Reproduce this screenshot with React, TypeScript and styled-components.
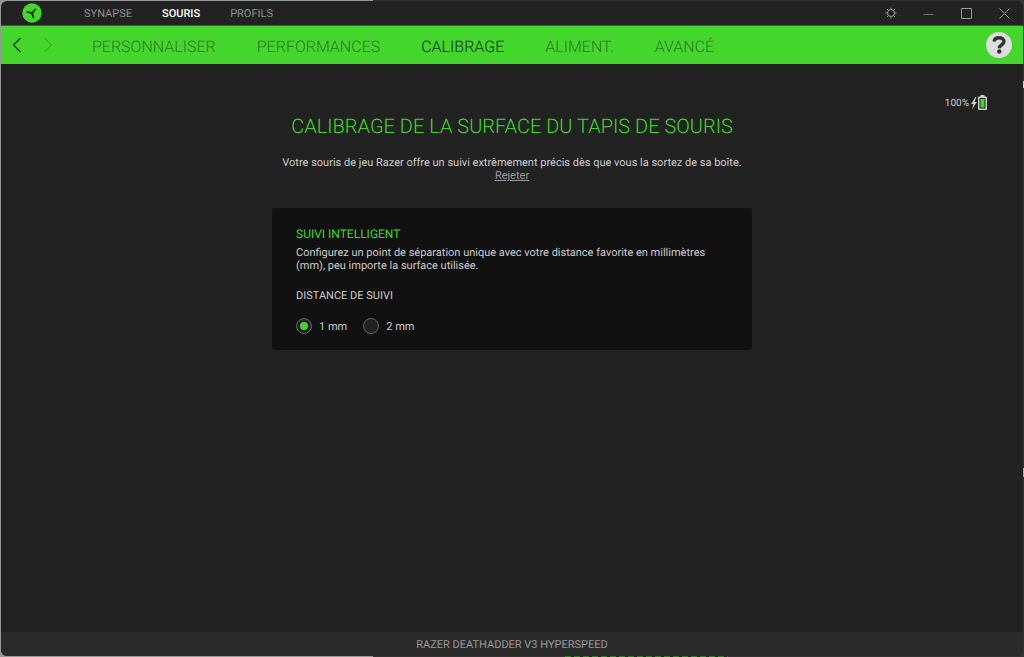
import React, { useState } from "react";
import styled, { createGlobalStyle } from "styled-components";

const GlobalStyle = createGlobalStyle`
  *, *::before, *::after { box-sizing: border-box; }
  body {
    margin: 0;
    background: #050505;
    font-family: Roboto, "Liberation Sans", sans-serif;
    font-size: 11px;
    line-height: 13px;
    color: #ccc;
    text-rendering: geometricPrecision;
  }
  button { font: inherit; border: 0; padding: 0; background: none; cursor: pointer; }
`;

const Desktop = styled.div`
  min-height: 100vh;
  padding: 1px;
  display: flex;
  background:
    linear-gradient(#ccc, #ccc) 100% 81px / 1px 7px no-repeat,
    linear-gradient(#aaa, #aaa) 100% 468px / 1px 9px no-repeat,
    repeating-linear-gradient(90deg, #2f7a24 0 6px, #222 6px 9px) 565px 100% / 163px 1px no-repeat,
    linear-gradient(90deg, #949897 373px, #333 373px);
`;

const Window = styled.div`
  flex: 1;
  display: flex;
  flex-direction: column;
  background: #222;
  border-radius: 6px;
  overflow: hidden;
`;

const TitleBar = styled.header`
  display: flex;
  align-items: center;
  height: 25px;
  padding: 0 12px 0 21px;
  border-bottom: 1px solid #2f6b27;
`;

const MainNav = styled.nav`
  display: flex;
  flex: 1;
  gap: 30px;
  margin-left: 42px;
`;

const MainLink = styled.a<{ $active?: boolean }>`
  color: ${(p) => (p.$active ? "#fff" : "#8f8f8f")};
  font-weight: ${(p) => (p.$active ? 500 : 400)};
  text-decoration: none;
`;

const WindowControls = styled.div`
  display: flex;
  gap: 25px;
`;

const IconButton = styled.button`
  display: grid;
  place-items: center;
  width: 13px;
  height: 16px;
  color: #999;
`;

const TabBar = styled.div`
  display: flex;
  align-items: center;
  height: 38px;
  padding: 0 11px;
  background: #44d62c;
`;

const Arrow = styled.button`
  display: grid;
  width: 10px;
  height: 16px;
  margin-right: 21px;
  color: #143f0d;
  &:disabled { color: #2d961d; }
`;

const Tabs = styled.nav`
  display: flex;
  flex: 1;
  gap: 41px;
  margin-left: 18px;
  padding-top: 3px;
`;

const Tab = styled.a<{ $active?: boolean }>`
  color: ${(p) => (p.$active ? "#102c0b" : "#2a7a1e")};
  font-size: 16px;
  line-height: 20px;
  font-weight: 300;
  text-decoration: none;
`;

const HelpButton = styled.button`
  display: grid;
  place-items: center;
  width: 26px;
  height: 26px;
  border-radius: 50%;
  background: #ddd;
  color: #333;
`;

const Content = styled.main`
  flex: 1;
  display: flex;
  flex-direction: column;
  align-items: center;
  padding: 30px 16px;
`;

const Battery = styled.div`
  align-self: flex-end;
  display: flex;
  align-items: center;
  gap: 2px;
  height: 18px;
  margin-right: 20px;
  font-size: 10px;
`;

const Title = styled.h1`
  margin: 0;
  color: #44d62c;
  font-size: 20px;
  line-height: 28px;
  font-weight: 300;
  text-align: center;
`;

const Intro = styled.p`
  margin: 16px 0 0;
  text-align: center;
`;

const Dismiss = styled.button`
  color: #999;
  text-decoration: underline;
`;

const Card = styled.section`
  width: 480px;
  max-width: 100%;
  margin-top: 26px;
  padding: 18px 24px 16px;
  border-radius: 3px;
  background: #111;
`;

const CardTitle = styled.h2`
  margin: 0 0 4px;
  color: #44d62c;
  font-size: 12px;
  line-height: 16px;
  font-weight: 400;
`;

const CardText = styled.p`
  margin: 0;
`;

const Options = styled.fieldset`
  display: flex;
  gap: 16px;
  margin: 17px 0 0;
  padding: 0;
  border: 0;
`;

const Legend = styled.legend`
  padding: 0;
  margin-bottom: 16px;
`;

const Option = styled.label`
  display: flex;
  align-items: center;
  gap: 7px;
`;

const Radio = styled.input`
  appearance: none;
  display: grid;
  place-items: center;
  width: 16px;
  height: 16px;
  margin: 0;
  border: 1px solid #666;
  border-radius: 50%;
  background: #222;
  &:checked::before {
    content: "";
    width: 8px;
    height: 8px;
    border-radius: 50%;
    background: #44d62c;
  }
`;

const Footer = styled.footer`
  padding: 6px 0 5px;
  background: #2b2b2b;
  color: #999;
  text-align: center;
`;

const mainLinks = ["SYNAPSE", "SOURIS", "PROFILS"];
const tabs = ["PERSONNALISER", "PERFORMANCES", "CALIBRAGE", "ALIMENT.", "AVANCÉ"];

const Logo = () => (
  <svg width="20" height="20" viewBox="0 0 20 20" aria-hidden="true">
    <circle cx="10" cy="10" r="9.700" fill="#44d62c" />
    <g fill="none" stroke="#16330f" strokeWidth="1.800" strokeLinecap="round">
      <path d="M10 10C8 10.500 7 8.500 5.300 9" />
      <path d="M10 10C12 9.500 11.500 7 13.500 6.500" />
      <path d="M10 10C9.800 12 12 12.500 11.300 14.500" />
    </g>
    <circle cx="10" cy="10" r="1.500" fill="#16330f" />
  </svg>
);

const Gear = () => (
  <svg width="12" height="12" viewBox="0 0 12 12" fill="none" stroke="currentColor">
    <circle cx="6" cy="6" r="3.500" />
    <path d="M6 .5v2M6 9.500v2M.5 6h2M9.500 6h2M2 2l1.500 1.500M8.500 8.500L10 10M2 10l1.500-1.500M8.500 3.500L10 2" />
  </svg>
);

export default function App() {
  const [distance, setDistance] = useState(1);
  return (
    <Desktop>
      <GlobalStyle />
      <Window>
        <TitleBar>
          <Logo />
          <MainNav aria-label="Principal">
            {mainLinks.map((name) => (
              <MainLink key={name} href="#" $active={name === "SOURIS"}>{name}</MainLink>
            ))}
          </MainNav>
          <WindowControls>
            <IconButton aria-label="Paramètres"><Gear /></IconButton>
            <IconButton aria-label="Réduire">
              <svg width="11" height="11" viewBox="0 0 11 11" stroke="#777"><path d="M.5 6.500h10" /></svg>
            </IconButton>
            <IconButton aria-label="Agrandir">
              <svg width="11" height="11" viewBox="0 0 11 11" fill="none" stroke="currentColor"><path d="M.5.5h10v10H.5z" /></svg>
            </IconButton>
            <IconButton aria-label="Fermer">
              <svg width="11" height="11" viewBox="0 0 11 11" stroke="currentColor"><path d="M.5.5l10 10M10.500.5l-10 10" /></svg>
            </IconButton>
          </WindowControls>
        </TitleBar>
        <TabBar>
          <Arrow aria-label="Précédent">
            <svg width="10" height="16" viewBox="0 0 10 16" fill="none" stroke="currentColor" strokeWidth="1.200"><path d="M8.500 1L1.500 8l7 7" /></svg>
          </Arrow>
          <Arrow aria-label="Suivant" disabled>
            <svg width="10" height="16" viewBox="0 0 10 16" fill="none" stroke="currentColor"><path d="M1.500 1l7 7-7 7" /></svg>
          </Arrow>
          <Tabs aria-label="Souris">
            {tabs.map((name) => (
              <Tab key={name} href="#" $active={name === "CALIBRAGE"}>{name}</Tab>
            ))}
          </Tabs>
          <HelpButton aria-label="Aide">
            <svg width="14" height="18" viewBox="0 0 14 18" fill="none" stroke="currentColor" strokeWidth="3.400">
              <path d="M2 5.500C2.500 3 4.500 1.800 7 1.800c3 0 5 1.500 5 3.700 0 3.500-4.700 3-4.700 6.700" />
              <circle cx="7.300" cy="15.500" r="2.200" fill="currentColor" stroke="none" />
            </svg>
          </HelpButton>
        </TabBar>
        <Content>
          <Battery>
            <span>100%</span>
            <svg width="16" height="16" viewBox="0 0 16 16" aria-hidden="true">
              <path d="M4.500 2L0 9h2.500L1 14l5-7H3.500L5.500 2z" fill="#ccc" />
              <path d="M9.500 0h4v1.500H15a1 1 0 0 1 1 1V14a1 1 0 0 1-1 1H8a1 1 0 0 1-1-1V2.500a1 1 0 0 1 1-1h1.500z" fill="#ccc" />
              <path d="M8.500 3h6v10.500h-6z" fill="#222" />
              <path d="M9.500 4h4v8.500h-4z" fill="#44d62c" />
            </svg>
          </Battery>
          <Title>CALIBRAGE DE LA SURFACE DU TAPIS DE SOURIS</Title>
          <Intro>
            Votre souris de jeu Razer offre un suivi extrêmement précis dès que vous la sortez de sa boîte.
            <br />
            <Dismiss>Rejeter</Dismiss>
          </Intro>
          <Card>
            <CardTitle>SUIVI INTELLIGENT</CardTitle>
            <CardText>
              Configurez un point de séparation unique avec votre distance favorite en millimètres (mm), peu importe la surface utilisée.
            </CardText>
            <Options>
              <Legend>DISTANCE DE SUIVI</Legend>
              {[1, 2].map((mm) => (
                <Option key={mm}>
                  <Radio type="radio" name="distance" checked={distance === mm} onChange={() => setDistance(mm)} />
                  {mm} mm
                </Option>
              ))}
            </Options>
          </Card>
        </Content>
        <Footer>RAZER DEATHADDER V3 HYPERSPEED</Footer>
      </Window>
    </Desktop>
  );
}
